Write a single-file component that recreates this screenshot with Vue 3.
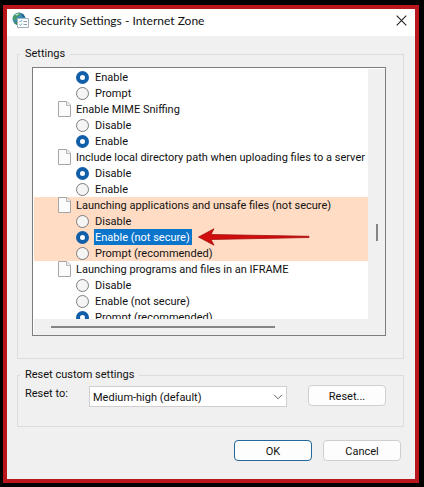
<script setup>
import { ref } from 'vue'

const groups = ref([
  { title: '', value: 'Enable', options: ['Enable', 'Prompt'] },
  { title: 'Enable MIME Sniffing', value: 'Enable', options: ['Disable', 'Enable'] },
  {
    title: 'Include local directory path when uploading files to a server',
    value: 'Disable',
    options: ['Disable', 'Enable'],
  },
  {
    title: 'Launching applications and unsafe files (not secure)',
    value: 'Enable (not secure)',
    warn: true,
    options: ['Disable', 'Enable (not secure)', 'Prompt (recommended)'],
  },
  {
    title: 'Launching programs and files in an IFRAME',
    value: 'Prompt (recommended)',
    options: ['Disable', 'Enable (not secure)', 'Prompt (recommended)'],
  },
])
const level = ref('Medium-high (default)')
</script>

<template>
  <div class="backdrop">
    <main class="window">
      <header class="titlebar">
        <svg class="app-icon" width="17" height="17" viewBox="0 0 17 17" aria-hidden="true">
          <circle cx="7" cy="7" r="6.5" fill="#3d8fb8" />
          <path d="M1 5Q3 1 7 .7L9 2 7 4 5 4.500 4.500 7 2 8.500Q.4 7 1 5Z" fill="#4a9a62" />
          <path d="M3 3Q5 1 7 1.500L5 3.500Z" fill="#d3eceb" />
          <path d="M9 1.500Q12 2 13 5.500L10.500 5Z" fill="#1f5f91" />
          <path d="M2 10L5 9 6 13Q3 12.500 2 10Z" fill="#3a8a63" />
          <path d="M5.500 6.500h11v9h-11z" fill="#fbfdfe" stroke="#a3b3bd" />
          <path d="M7.500 9l1 1 1.500-2M7.500 12.500l1 1 1.500-2" fill="none" stroke="#6aa9c8" />
          <path d="M11.500 9.500H15M11.500 12.500H15" stroke="#8b9aa3" />
        </svg>
        <h1>Security Settings - Internet Zone</h1>
        <button class="close" type="button" aria-label="Close">
          <svg width="11" height="11" viewBox="0 0 11 11" aria-hidden="true">
            <path d="M.7.7l9.600 9.600M10.300.7L.7 10.300" stroke="#222" stroke-width="1.100" />
          </svg>
        </button>
      </header>

      <form class="body" @submit.prevent>
        <fieldset class="group settings">
          <legend>Settings</legend>
          <div class="listbox">
            <div class="rows">
              <section v-for="(g, i) in groups" :key="i" :class="{ warn: g.warn }">
                <h2 v-if="g.title" class="row heading">
                  <svg width="13" height="16" viewBox="0 0 13 16" aria-hidden="true">
                    <path d="M.5 .5H9L12.500 4V15.500H.5Z" fill="#fbfbfb" stroke="#a5a5a5" />
                    <path d="M8.500 .5V4.500H12.500" fill="#eee" stroke="#b5b5b5" />
                  </svg>
                  <span>{{ g.title }}</span>
                </h2>
                <label v-for="o in g.options" :key="o" class="row option">
                  <input v-model="g.value" type="radio" :name="'setting-' + i" :value="o" />
                  <span :class="{ selected: g.warn && g.value === o }">{{ o }}</span>
                </label>
                <svg v-if="g.warn" class="arrow" width="112" height="18" viewBox="0 0 112 18" aria-hidden="true">
                  <path
                    d="M.5 9L16 .8 13 6.500 111 8.300V9.500L13 11.500 16 17.200Z"
                    fill="#d00c0c"
                    stroke="#a51212"
                    stroke-width=".8"
                  />
                </svg>
              </section>
            </div>
            <div class="vscroll"><i></i></div>
            <div class="hscroll"><i></i></div>
          </div>
        </fieldset>

        <fieldset class="group reset">
          <legend>Reset custom settings</legend>
          <div class="reset-row">
            <label for="level">Reset to:</label>
            <div class="select">
              <select id="level" v-model="level">
                <option>Medium-high (default)</option>
              </select>
              <svg width="10" height="6" viewBox="0 0 10 6" aria-hidden="true">
                <path d="M1 .8l4 4 4-4" fill="none" stroke="#666" />
              </svg>
            </div>
            <button class="btn" type="button">Reset...</button>
          </div>
        </fieldset>

        <footer class="actions">
          <button class="btn primary" type="submit">OK</button>
          <button class="btn" type="button">Cancel</button>
        </footer>
      </form>
    </main>
  </div>
</template>

<style>
body {
  margin: 0;
  background: #000;
}
</style>

<style scoped>
* {
  box-sizing: border-box;
}
.backdrop {
  padding: 5px 5px 4px 3px;
  font: 11px/16px Roboto, sans-serif;
  color: #111;
}
button,
select {
  font: inherit;
  color: inherit;
}
.window {
  border: 4px solid #b9161b;
  background: #f0f0f0;
}
.titlebar {
  display: flex;
  align-items: center;
  height: 27px;
  padding: 0 8px 4px 5px;
  background: #fff;
}
h1 {
  flex: 1;
  margin: 0 0 0 5px;
  font: 12px/16px Lato, sans-serif;
}
.close {
  display: flex;
  padding: 0;
  border: 0;
  background: none;
}
.body {
  padding: 10px 11px 18px 10px;
}
.group {
  min-width: 0;
  margin: 0;
  border: 1px solid #dcdcdc;
}
legend {
  padding: 0 5px;
}
.settings {
  padding: 5px 17px 22px 14px;
}
.settings legend {
  margin-left: -12px;
}
.listbox {
  display: grid;
  grid-template-columns: 1fr 17px;
  grid-template-rows: 250px 16px;
  padding: 1px 0 0 1px;
  border: 1px solid #7d7d7d;
  background: #fff;
}
.rows {
  overflow: hidden;
}
section {
  position: relative;
}
.warn {
  background: #ffdcc3;
}
.row {
  display: flex;
  align-items: center;
  height: 16px;
  margin: 0;
  font-size: inherit;
  font-weight: normal;
  white-space: nowrap;
}
.row svg,
.row input {
  flex: none;
}
.row span {
  padding-top: 2px;
  line-height: 14px;
}
.heading {
  gap: 5px;
  padding-left: 24px;
}
.option {
  gap: 5px;
  padding-left: 42px;
}
.option span {
  padding-right: 2px;
  padding-left: 1px;
}
.option .selected {
  background: #0b75cc;
  color: #fff;
}
input {
  appearance: none;
  width: 13px;
  height: 13px;
  margin: 0;
  border: 1px solid #7c7c7c;
  border-radius: 50%;
  background: #f5f5f5;
}
input:checked {
  border: 4px solid #135ea8;
  background: #fff;
}
.arrow {
  position: absolute;
  top: 31px;
  left: 164px;
}
.vscroll {
  display: flex;
  align-items: center;
  justify-content: center;
  padding-top: 76px;
  background: #f0f0f0;
}
.vscroll i {
  width: 2px;
  height: 17px;
  background: #858585;
}
.hscroll {
  grid-column: 1 / -1;
  display: flex;
  align-items: center;
  padding: 0 110px 0 17px;
  background: #f0f0f0;
}
.hscroll i {
  flex: 1;
  height: 2px;
  background: #858585;
}
.reset {
  margin-top: 8px;
  padding: 2px 17px 19px 7px;
}
.reset legend {
  margin-left: -5px;
}
.reset-row {
  display: flex;
}
.reset-row label {
  width: 64px;
  padding-top: 1px;
}
.select {
  position: relative;
  flex: 1;
  margin: 1px 21px 0 0;
}
select {
  appearance: none;
  display: block;
  width: 100%;
  height: 21px;
  padding: 2px 20px 0 3px;
  border: 1px solid #cfcfcf;
  border-radius: 0;
  background: #fff;
}
.select svg {
  position: absolute;
  top: 8px;
  right: 4px;
  pointer-events: none;
}
.btn {
  width: 78px;
  height: 21px;
  padding: 2px 0 0;
  border: 1px solid #cfcfcf;
  border-radius: 4px;
  background: #fdfdfd;
}
.primary {
  border-color: #23699b;
}
.actions {
  display: flex;
  justify-content: flex-end;
  gap: 11px;
  padding: 13px 3px 0 0;
}
</style>
